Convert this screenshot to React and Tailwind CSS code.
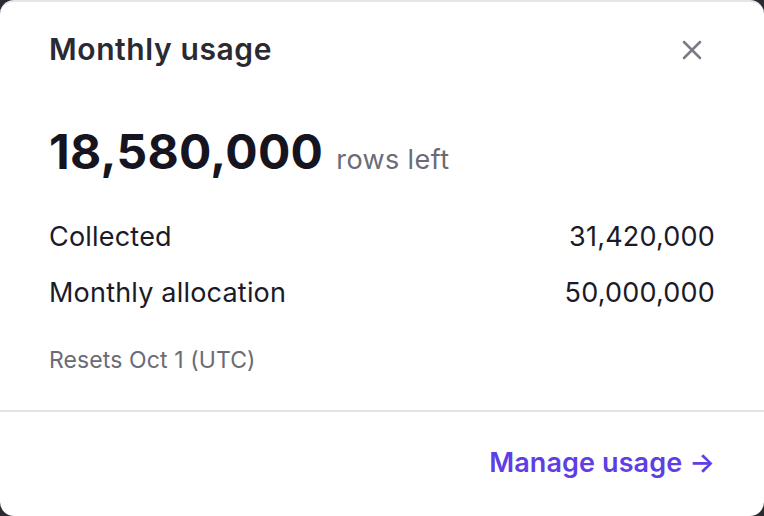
import { X } from "lucide-react";

const rows = [
  { label: "Collected", value: "31,420,000" },
  { label: "Monthly allocation", value: "50,000,000" },
];

export default function App() {
  return (
    <div className="h-[516px] w-[764px] bg-[#2a2a30] font-['Inter',sans-serif]">
      <div className="flex h-full flex-col overflow-hidden rounded-[14px] border-t-2 border-[#e6e6e8] bg-white">
        <div className="flex h-[96px] items-start justify-between pl-[49px] pr-[56px] pt-[27px]">
          <h2 className="text-[30px] font-semibold leading-[40px] tracking-[0.6px] text-[#2a2a33]">Monthly usage</h2>
          <button className="mt-[5px] text-[#7b7b86]">
            <X size={32} strokeWidth={1.9} />
          </button>
        </div>
        <div className="flex flex-col px-[49px]">
          <div className="mt-[26px] flex h-[56px] items-baseline gap-[13px]">
            <span className="text-[48px] font-bold leading-[56px] tracking-[0.3px] text-[#16141f]">18,580,000</span>
            <span className="text-[27px] leading-[30px] tracking-[0.4px] text-[#6b6b76]">rows left</span>
          </div>
          <div className="mt-[29px] flex flex-col">
            {rows.map((r) => (
              <div key={r.label} className="flex h-[56px] items-center justify-between text-[27px] tracking-[0.2px] text-[#1b1a28]">
                <span>{r.label}</span>
                <span>{r.value}</span>
              </div>
            ))}
          </div>
          <div className="mt-[25px] text-[23px] leading-[28px] tracking-[0.1px] text-[#6b6b76]">Resets Oct 1 (UTC)</div>
        </div>
        <div className="mt-[36px] h-[2px] bg-[#e3e3e5]" />
        <div className="flex flex-1 items-center justify-end px-[49px] pb-[2px]">
          <a className="text-[27px] font-semibold tracking-[0.1px] text-[#5e3fe6]">Manage usage →</a>
        </div>
      </div>
    </div>
  );
}
